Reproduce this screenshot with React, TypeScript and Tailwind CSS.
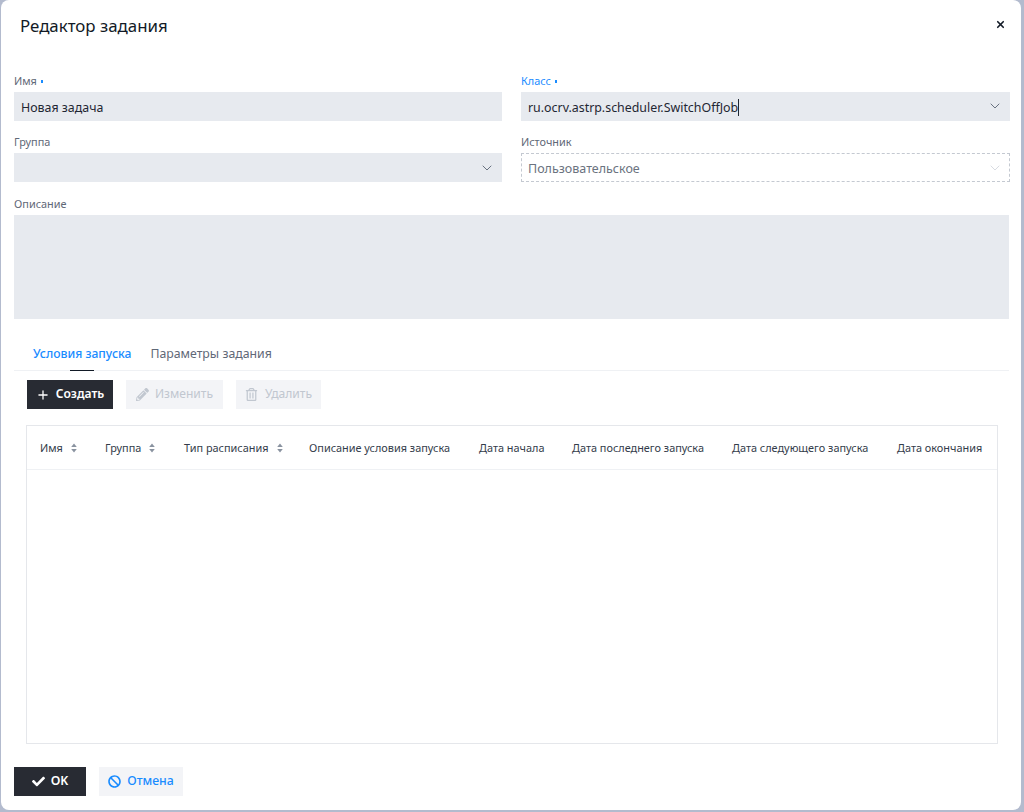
import React from "react";
import { ChevronDown, Plus, X } from "lucide-react";
import { FaPencilAlt, FaRegTrashAlt, FaCheck, FaBan } from "react-icons/fa";

function Label({ text, req, active }: { text: string; req?: boolean; active?: boolean }) {
  return (
    <div className={`h-[21px] pb-[1px] flex items-center text-[10.9px] leading-none ${active ? "text-[#1a8cff]" : "text-[#5f6877]"}`}>
      <span>{text}</span>
      {req && <span className="ml-[4px] w-[2.5px] h-[2.5px] bg-[#1a8cff] mt-[1px]" />}
    </div>
  );
}

function Sort() {
  return (
    <svg width="6" height="10" viewBox="0 0 6 10" className="ml-[8px] shrink-0">
      <path d="M3 0.5 L5.8 3.9 H0.2 Z M3 9.5 L0.2 6.1 H5.8 Z" fill="#8a93a0" />
    </svg>
  );
}

function Th({ text, sort, className }: { text: string; sort?: boolean; className: string }) {
  return (
    <div className={`flex items-center text-[10.9px] text-[#333c4a] whitespace-nowrap ${className}`}>
      <span>{text}</span>
      {sort && <Sort />}
    </div>
  );
}

export default function App() {
  return (
    <div className="h-[812px] w-[1024px] bg-[#b3bbce] overflow-hidden" style={{ fontFamily: '"Noto Sans", sans-serif' }}>
      <div className="ml-[1px] w-[1020px] h-[810px] bg-white rounded-[8px] flex flex-col pl-[13px] pr-[12px]">
        <div className="h-[71px] shrink-0 flex items-start justify-between pl-[6px] pr-[4px]">
          <h1 className="mt-[13px] text-[16.85px] leading-[26px] text-[#121a26]">Редактор задания</h1>
          <X size={11} strokeWidth={3.6} className="mt-[19px] mr-[-1px] text-[#121a26]" />
        </div>

        <div className="grid grid-cols-[488px_489px] gap-x-[19px] shrink-0 text-[12.4px]">
          <div>
            <Label text="Имя" req />
            <div className="h-[29px] pt-[3px] bg-[#e7eaef] flex items-center px-[7px] text-[#1f2733]">Новая задача</div>
          </div>
          <div>
            <Label text="Класс" req active />
            <div className="h-[29px] bg-[#e7eaef] flex items-center pl-[7px] pr-[7px] text-[#1f2733]">
              <span className="pt-[3px]">ru.ocrv.astrp.scheduler.SwitchOffJob</span>
              <span className="w-[1px] h-[17px] bg-[#1f2733] mt-[1px]" />
              <ChevronDown size={16} strokeWidth={1.4} className="ml-auto mb-[1px] text-[#5f6877]" />
            </div>
          </div>
          <div className="mt-[11px]">
            <Label text="Группа" />
            <div className="h-[29px] bg-[#e7eaef] flex items-center justify-end pr-[7px]">
              <ChevronDown size={16} strokeWidth={1.4} className="text-[#5f6877]" />
            </div>
          </div>
          <div className="mt-[11px]">
            <Label text="Источник" />
            <div className="h-[29px] border border-dashed border-[#c4c9d1] flex items-center pl-[6px] pr-[6px] text-[#6b7380]">
              <span className="pt-[3px] text-[12.5px]">Пользовательское</span>
              <ChevronDown size={16} strokeWidth={1.2} className="ml-auto text-[#cfd3da]" />
            </div>
          </div>
        </div>

        <div className="mt-[12px] shrink-0">
          <Label text="Описание" />
          <div className="h-[104px] bg-[#e7eaef]" />
        </div>

        <div className="h-[52px] shrink-0 border-b border-[#eff1f4] flex items-end pl-[19px]">
          <div className="relative h-[25px] text-[12.15px] text-[#1a8cff] font-medium">
            Условия запуска
            <span className="absolute left-[37px] bottom-[-1px] w-[24px] h-[1px] bg-[#121a26]" />
          </div>
          <div className="h-[25px] ml-[19px] text-[12.3px] text-[#5f6877]">Параметры задания</div>
        </div>

        <div className="mt-[9px] shrink-0 flex gap-[13px] pl-[13px] text-[12.1px]">
          <div className="h-[29px] w-[86px] bg-[#282b33] text-white flex items-center justify-center font-semibold gap-[6px]">
            <Plus size={14} strokeWidth={2.2} />
            <span>Создать</span>
          </div>
          <div className="h-[29px] w-[97px] bg-[#f3f4f7] text-[#c1c7d0] flex items-center justify-center gap-[6px]">
            <FaPencilAlt size={13} />
            <span>Изменить</span>
          </div>
          <div className="h-[29px] w-[85px] bg-[#f3f4f7] text-[#c1c7d0] flex items-center justify-center gap-[7px]">
            <FaRegTrashAlt size={13} />
            <span>Удалить</span>
          </div>
        </div>

        <div className="mt-[16px] ml-[12px] w-[972px] h-[319px] shrink-0 border border-[#e5e7eb]">
          <div className="h-[44px] border-b border-[#eff1f4] flex items-center pt-[1px]">
            <Th text="Имя" sort className="ml-[13px] w-[65px]" />
            <Th text="Группа" sort className="w-[79px]" />
            <Th text="Тип расписания" sort className="w-[125px] text-[10.7px]" />
            <Th text="Описание условия запуска" className="w-[170px]" />
            <Th text="Дата начала" className="w-[93px]" />
            <Th text="Дата последнего запуска" className="w-[160px]" />
            <Th text="Дата следующего запуска" className="w-[165px]" />
            <Th text="Дата окончания" className="" />
          </div>
        </div>

        <div className="mt-[23px] shrink-0 flex gap-[13px] text-[12.3px]">
          <div className="h-[29px] w-[72px] bg-[#282b33] text-white flex items-center justify-center gap-[6px] font-semibold">
            <FaCheck size={13} />
            <span>OK</span>
          </div>
          <div className="h-[29px] w-[84px] bg-[#f3f4f7] text-[#1a8cff] flex items-center justify-center gap-[6px] font-medium">
            <FaBan size={13} />
            <span>Отмена</span>
          </div>
        </div>
      </div>
    </div>
  );
}
